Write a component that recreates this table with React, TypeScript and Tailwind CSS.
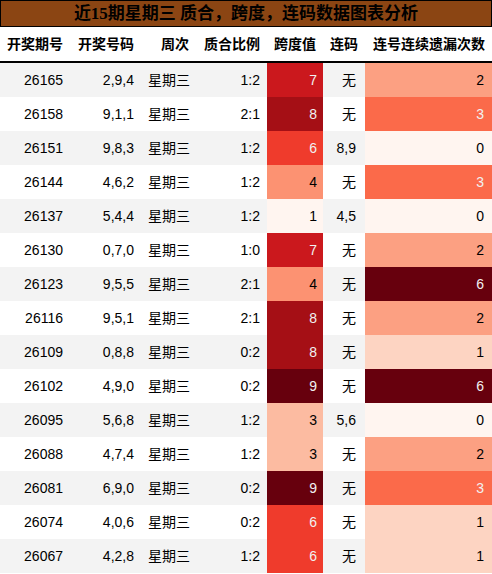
const rows = [
  { no: "26165", code: "2,9,4", ratio: "1:2", span: 7, link: "无", miss: 2 },
  { no: "26158", code: "9,1,1", ratio: "2:1", span: 8, link: "无", miss: 3 },
  { no: "26151", code: "9,8,3", ratio: "1:2", span: 6, link: "8,9", miss: 0 },
  { no: "26144", code: "4,6,2", ratio: "1:2", span: 4, link: "无", miss: 3 },
  { no: "26137", code: "5,4,4", ratio: "1:2", span: 1, link: "4,5", miss: 0 },
  { no: "26130", code: "0,7,0", ratio: "1:0", span: 7, link: "无", miss: 2 },
  { no: "26123", code: "9,5,5", ratio: "2:1", span: 4, link: "无", miss: 6 },
  { no: "26116", code: "9,5,1", ratio: "2:1", span: 8, link: "无", miss: 2 },
  { no: "26109", code: "0,8,8", ratio: "0:2", span: 8, link: "无", miss: 1 },
  { no: "26102", code: "4,9,0", ratio: "0:2", span: 9, link: "无", miss: 6 },
  { no: "26095", code: "5,6,8", ratio: "1:2", span: 3, link: "5,6", miss: 0 },
  { no: "26088", code: "4,7,4", ratio: "1:2", span: 3, link: "无", miss: 2 },
  { no: "26081", code: "6,9,0", ratio: "0:2", span: 9, link: "无", miss: 3 },
  { no: "26074", code: "4,0,6", ratio: "0:2", span: 6, link: "无", miss: 1 },
  { no: "26067", code: "4,2,8", ratio: "1:2", span: 6, link: "无", miss: 1 },
]

// Reds gradient, precomputed per value
const spanCell: Record<number, string> = {
  1: "bg-[#fff5f0] text-black",
  3: "bg-[#fcbba1] text-black",
  4: "bg-[#fc9272] text-black",
  6: "bg-[#ef3b2c] text-[#f1f1f1]",
  7: "bg-[#cb181d] text-[#f1f1f1]",
  8: "bg-[#a50f15] text-[#f1f1f1]",
  9: "bg-[#67000d] text-[#f1f1f1]",
}

const missCell: Record<number, string> = {
  0: "bg-[#fff5f0] text-black",
  1: "bg-[#fdd4c2] text-black",
  2: "bg-[#fca082] text-black",
  3: "bg-[#fb6a4a] text-[#f1f1f1]",
  6: "bg-[#67000d] text-[#f1f1f1]",
}

const headers = ["开奖期号", "开奖号码", "周次", "质合比例", "跨度值", "连码", "连号连续遗漏次数"]

const grid = "grid grid-cols-[70px_71px_55px_71px_56px_42px_127px]"

export default function App() {
  return (
    <div className="w-[492px] h-[574px] overflow-hidden bg-white text-[14px] text-black font-['Liberation_Sans','Noto_Sans_CJK_SC',sans-serif]">
      <div className="h-[27px] border border-black bg-[#8b4513] flex items-center justify-center text-[17px] font-bold font-['Liberation_Serif','Noto_Sans_CJK_SC',serif]">
        近15期星期三 质合，跨度，连码数据图表分析
      </div>
      <div className={`${grid} h-[36px] border-b-2 border-black font-bold`}>
        {headers.map((h) => (
          <div key={h} className="flex items-center justify-end pr-[7px] whitespace-nowrap">
            {h}
          </div>
        ))}
      </div>
      {rows.map((r, i) => (
        <div key={r.no} className={`${grid} h-[34px] ${i % 2 === 0 ? "bg-[#f3f3f3]" : "bg-white"}`}>
          <div className="flex items-center justify-end pr-[7px]">{r.no}</div>
          <div className="flex items-center justify-end pr-[7px]">{r.code}</div>
          <div className="flex items-center justify-end pr-[6px]">星期三</div>
          <div className="flex items-center justify-end pr-[7px]">{r.ratio}</div>
          <div className={`flex items-center justify-end pr-[6px] ${spanCell[r.span]}`}>{r.span}</div>
          <div className="flex items-center justify-end pr-[9px]">{r.link}</div>
          <div className={`flex items-center justify-end pr-[8px] ${missCell[r.miss]}`}>{r.miss}</div>
        </div>
      ))}
    </div>
  )
}
